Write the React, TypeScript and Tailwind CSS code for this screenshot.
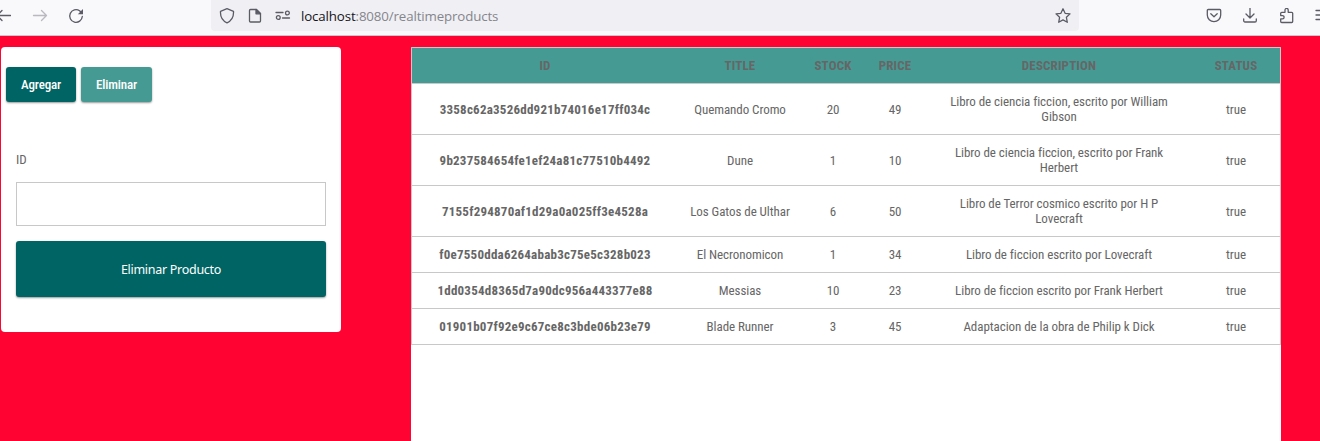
import React from "react";

type Product = {
  id: string;
  title: string;
  stock: number;
  price: number;
  description: string[];
};

const products: Product[] = [
  { id: "3358c62a3526dd921b74016e17ff034c", title: "Quemando Cromo", stock: 20, price: 49, description: ["Libro de ciencia ficcion, escrito por William", "Gibson"] },
  { id: "9b237584654fe1ef24a81c77510b4492", title: "Dune", stock: 1, price: 10, description: ["Libro de ciencia ficcion, escrito por Frank", "Herbert"] },
  { id: "7155f294870af1d29a0a025ff3e4528a", title: "Los Gatos de Ulthar", stock: 6, price: 50, description: ["Libro de Terror cosmico escrito por H P", "Lovecraft"] },
  { id: "f0e7550dda6264abab3c75e5c328b023", title: "El Necronomicon", stock: 1, price: 34, description: ["Libro de ficcion escrito por Lovecraft"] },
  { id: "1dd0354d8365d7a90dc956a443377e88", title: "Messias", stock: 10, price: 23, description: ["Libro de ficcion escrito por Frank Herbert"] },
  { id: "01901b07f92e9c67ce8c3bde06b23e79", title: "Blade Runner", stock: 3, price: 45, description: ["Adaptacion de la obra de Philip k Dick"] },
];

const columns = ["ID", "TITLE", "STOCK", "PRICE", "DESCRIPTION", "STATUS"];
const grid = "grid grid-cols-[266px_124px_62px_62px_266px_88px] items-center justify-items-center border-b border-[#c8c8c8]";

function Icon({ children, className = "" }: { children: React.ReactNode; className?: string }) {
  return (
    <svg viewBox="0 0 16 16" className={`h-4 w-4 shrink-0 ${className}`} fill="none" stroke="#5b5b66" strokeWidth="1.3" strokeLinecap="round" strokeLinejoin="round">
      {children}
    </svg>
  );
}

function Toolbar() {
  return (
    <header className="flex h-9 items-start border-b border-[#c8c8ce] bg-[#f9f9fb] font-['Open_Sans',sans-serif] font-stretch-normal">
      <div className="flex h-8 w-[211px] shrink-0 items-center">
        <Icon className="-ml-[5px]"><path d="M15.500 7.500H1.500M7 2.500 2 7.500 7 12.500" /></Icon>
        <Icon className="ml-[21px] opacity-40"><path d="M1.500 7.500h13M9.500 2.500 14.500 7.500 9.500 12.500" /></Icon>
        <Icon className="ml-5"><path d="M14.300 8.500A6.300 6.300 0 1 1 11.600 2.800L13 4.200" /><path d="M15 1v5.200H9.800z" fill="#5b5b66" stroke="none" /></Icon>
      </div>
      <div className="flex h-[31px] w-[868px] shrink-0 items-center rounded-b-[4px] bg-[#f0f0f4] pl-2">
        <Icon><path d="M8 .7 14.500 3.400C14.800 8.400 12.700 12.700 8 14.800 3.300 12.700 1.200 8.400 1.500 3.400z" /></Icon>
        <Icon className="ml-3"><path d="M3.500 1.500h6l4 4v7.500a1 1 0 0 1-1 1h-9a1 1 0 0 1-1-1v-10.500a1 1 0 0 1 1-1z" /><path d="M9 1.500v4.300h4.500z" fill="#5b5b66" /></Icon>
        <Icon className="ml-3"><path d="M1 4.500H8M7.500 10H14.500" /><circle cx="12.400" cy="5" r="1.900" /><circle cx="3.300" cy="9.500" r="1.900" /></Icon>
        <span className="ml-[10px] text-[13.300px] leading-5 tracking-[-0.13px] whitespace-nowrap text-[#15141a]">
          localhost<span className="text-[#85858c]">:8080/realtimeproducts</span>
        </span>
        <Icon className="mr-2 ml-auto"><path d="m8 .8 2.100 4.500 4.900.6-3.600 3.400.9 5L8 11.900l-4.300 2.400.9-5L1 5.900l4.900-.6z" /></Icon>
      </div>
      <div className="flex h-[31px] grow items-center overflow-hidden pl-[127px]">
        <Icon><path d="M2.200 1.500h11.600a.9.9 0 0 1 .9.9V7a6.700 6.700 0 0 1-13.400 0V2.400A.9.900 0 0 1 2.200 1.500zM4.800 5.700 8 8.700l3.200-3" /></Icon>
        <Icon className="ml-5"><path d="M8 0v10M4 6l4 4 4-4M1.700 11v1.700a1.300 1.300 0 0 0 1.300 1.300h10a1.300 1.300 0 0 0 1.300-1.300v-1.700" /></Icon>
        <Icon className="ml-[21px]"><path d="M6 4.300V2a1.600 1.600 0 0 1 3.200 0v2.300h3.500a1 1 0 0 1 1 1v8.200a1 1 0 0 1-1 1H2.700a1 1 0 0 1-1-1v-2.700h1.800a1.600 1.600 0 0 0 0-3.200H1.700V5.300a1 1 0 0 1 1-1z" /></Icon>
        <Icon className="ml-[19px]"><path d="M2 2.500h12.500M2 7h12.500M2 11.500h12.500" /></Icon>
      </div>
    </header>
  );
}

export default function App() {
  return (
    <div className="flex h-[441px] w-[1320px] flex-col overflow-hidden bg-[#ff0433] font-['Roboto_Condensed',Roboto,sans-serif] text-[13px] leading-[15px] text-[#666] font-stretch-condensed">
      <Toolbar />
      <main className="flex grow items-start pt-[11px] pl-px">
        <section className="h-[285px] w-[340px] rounded-[4px] bg-white pt-5">
          <div className="flex gap-[5px] pl-[5px] font-medium text-white">
            <button className="h-[35px] w-[70px] rounded-[3px] bg-[#006464] tracking-[-0.15px] shadow-[0_1px_2px_rgba(0,0,0,0.4)]">Agregar</button>
            <button className="h-[35px] w-[71px] rounded-[3px] bg-[#469a94] tracking-[-0.15px] shadow-[0_1px_2px_rgba(0,0,0,0.4)]">Eliminar</button>
          </div>
          <form className="flex flex-col px-[15px] pt-[50px]">
            <label htmlFor="pid">ID</label>
            <input id="pid" className="mt-[15px] h-11 border border-[#c8c8c8] px-3 outline-none" />
            <button type="button" className="mt-[15px] h-14 rounded-[3px] bg-[#006464] pt-px font-['Noto_Sans',sans-serif] text-[12.500px] tracking-[-0.28px] text-white shadow-[0_1px_2px_rgba(0,0,0,0.4)] font-stretch-normal">
              Eliminar Producto
            </button>
          </form>
        </section>
        <section className="ml-[70px] h-[394px] w-[870px] bg-white">
          <div className="border border-b-0 border-[#c8c8c8] text-center">
            <div className={`${grid} h-9 bg-[#469a94] font-bold tracking-[0.15px]`}>
              {columns.map((c) => <span key={c}>{c}</span>)}
            </div>
            {products.map((p) => (
              <div key={p.id} className={`${grid} py-[10px] tracking-[-0.06px]`}>
                <span className="font-bold tracking-[0.23px]">{p.id}</span>
                <span>{p.title}</span>
                <span>{p.stock}</span>
                <span>{p.price}</span>
                <span>{p.description.map((l) => <span key={l} className="block whitespace-nowrap">{l}</span>)}</span>
                <span>true</span>
              </div>
            ))}
          </div>
        </section>
      </main>
    </div>
  );
}
